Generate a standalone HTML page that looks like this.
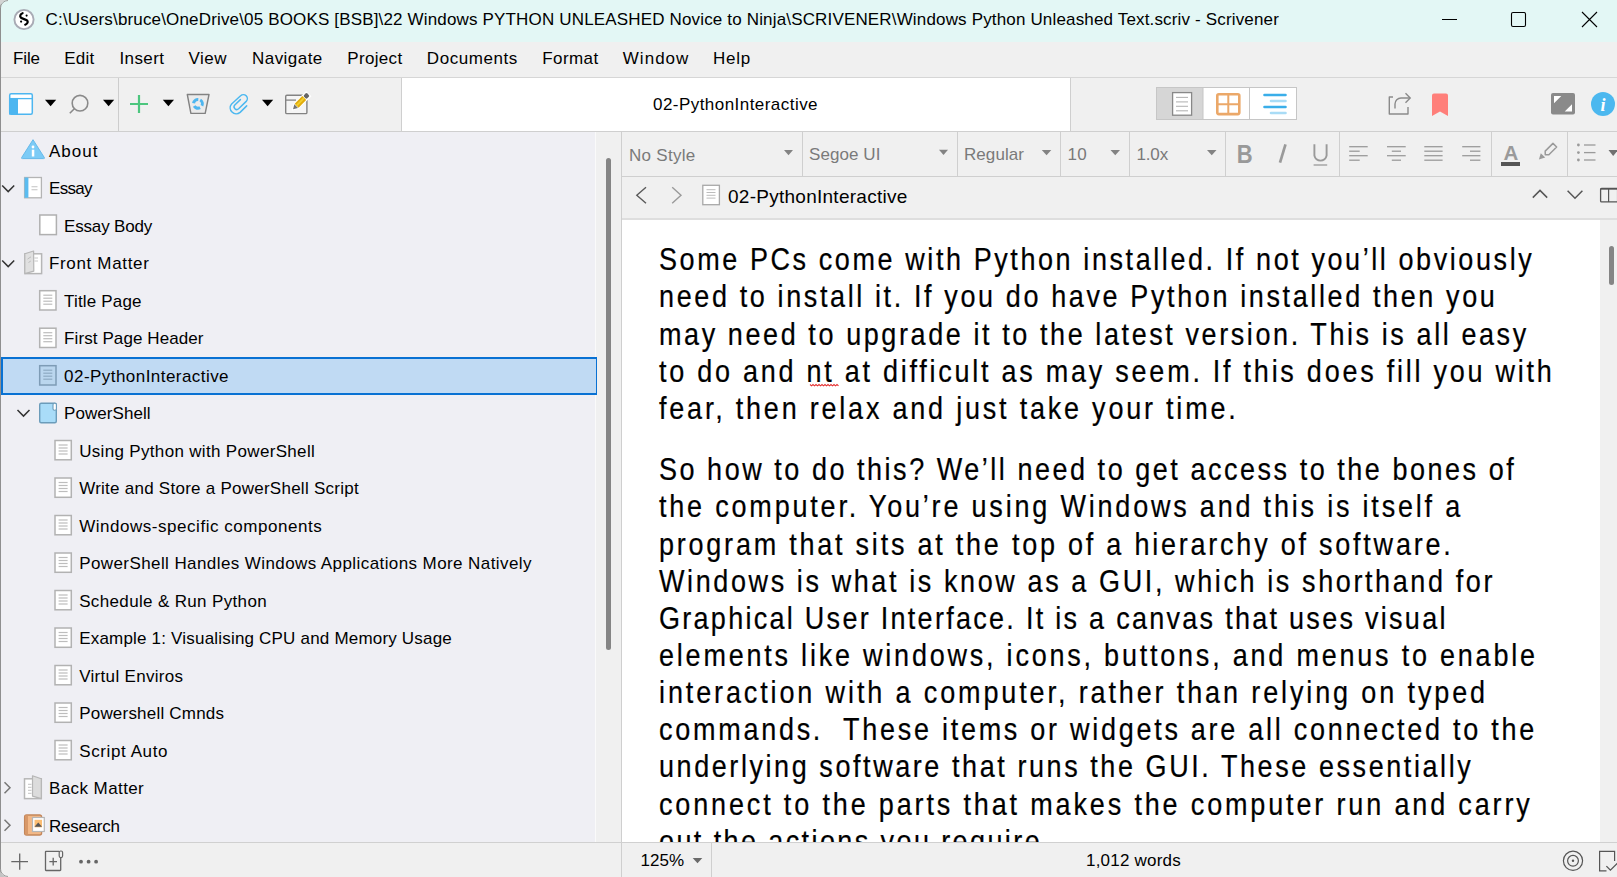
<!DOCTYPE html>
<html><head><meta charset="utf-8"><style>
html,body{margin:0;padding:0;}
body{width:1617px;height:877px;overflow:hidden;position:relative;background:#f0f0f0;font-family:"Liberation Sans", sans-serif;}
.r{position:absolute;}
.t{position:absolute;white-space:pre;font-family:"Liberation Sans", sans-serif;}
svg{position:absolute;overflow:visible;}
#ed{position:absolute;left:622px;top:220px;width:978px;height:622px;overflow:hidden;}
</style></head><body>
<div class="r" style="left:0;top:0;width:1617px;height:42px;background:#e3f7f5"></div>
<div class="r" style="left:0;top:42px;width:1617px;height:90px;background:#f0f0f0"></div>
<div class="r" style="left:0;top:77px;width:1617px;height:1px;background:#d6d6d6"></div>
<div class="r" style="left:0;top:131px;width:1617px;height:1px;background:#cfcfcf"></div>
<div class="r" style="left:401px;top:78px;width:1px;height:53px;background:#cfcfcf"></div>
<div class="r" style="left:402px;top:78px;width:668px;height:53px;background:#fff"></div>
<div class="r" style="left:1070px;top:78px;width:1px;height:53px;background:#cfcfcf"></div>
<div class="r" style="left:118px;top:78px;width:1px;height:53px;background:#cdcdcd"></div>
<div class="r" style="left:0;top:132px;width:595px;height:710px;background:#efeff4"></div>
<div class="r" style="left:595px;top:132px;width:1px;height:710px;background:#fafafa"></div>
<div class="r" style="left:596px;top:132px;width:25px;height:710px;background:#f0f0f0"></div>
<div class="r" style="left:606px;top:158px;width:5px;height:492px;background:#858585;border-radius:3px"></div>
<div class="r" style="left:621px;top:132px;width:1px;height:710px;background:#cfcfcf"></div>
<div class="r" style="left:1px;top:357px;width:593px;height:34px;background:#c0daf3;border:2px solid #0871d3;border-right:1px solid #0871d3"></div>
<div class="r" style="left:622px;top:132px;width:995px;height:86px;background:#f0f0f0"></div>
<div class="r" style="left:622px;top:176px;width:995px;height:1px;background:#cfcfcf"></div>
<div class="r" style="left:622px;top:218px;width:995px;height:2px;background:#dedede"></div>
<div class="r" style="left:802px;top:132px;width:1px;height:44px;background:#cfcfcf"></div>
<div class="r" style="left:957px;top:132px;width:1px;height:44px;background:#cfcfcf"></div>
<div class="r" style="left:1060px;top:132px;width:1px;height:44px;background:#cfcfcf"></div>
<div class="r" style="left:1129px;top:132px;width:1px;height:44px;background:#cfcfcf"></div>
<div class="r" style="left:1225px;top:132px;width:1px;height:44px;background:#cfcfcf"></div>
<div class="r" style="left:1339px;top:132px;width:1px;height:44px;background:#cfcfcf"></div>
<div class="r" style="left:1491px;top:132px;width:1px;height:44px;background:#cfcfcf"></div>
<div class="r" style="left:1567px;top:132px;width:1px;height:44px;background:#cfcfcf"></div>
<div class="r" style="left:622px;top:220px;width:978px;height:622px;background:#fff"></div>
<div class="r" style="left:1600px;top:220px;width:17px;height:622px;background:#f0f0f0"></div>
<div class="r" style="left:1609px;top:246px;width:5px;height:39px;background:#858585;border-radius:3px"></div>
<div class="r" style="left:0;top:842px;width:1617px;height:35px;background:#f0f0f0"></div>
<div class="r" style="left:0;top:842px;width:1617px;height:1px;background:#d0d0d0"></div>
<div class="r" style="left:621px;top:843px;width:1px;height:34px;background:#cfcfcf"></div>
<div class="r" style="left:711px;top:843px;width:1px;height:34px;background:#cfcfcf"></div>
<div class="r" style="left:0;top:0;width:1px;height:877px;background:#8f8f8f"></div>
<div class="t" style="left:45.6px;top:11.21px;font-size:17px;line-height:17px;color:#000;letter-spacing:0.161px;word-spacing:0.000px;">C:\Users\bruce\OneDrive\05 BOOKS [BSB]\22 Windows PYTHON UNLEASHED Novice to Ninja\SCRIVENER\Windows Python Unleashed Text.scriv - Scrivener</div>
<div class="t" style="left:13.0px;top:50.41px;font-size:17px;line-height:17px;color:#000;letter-spacing:-0.127px;word-spacing:0.000px;">File</div>
<div class="t" style="left:64.3px;top:50.41px;font-size:17px;line-height:17px;color:#000;letter-spacing:0.226px;word-spacing:0.000px;">Edit</div>
<div class="t" style="left:119.5px;top:50.41px;font-size:17px;line-height:17px;color:#000;letter-spacing:0.395px;word-spacing:0.000px;">Insert</div>
<div class="t" style="left:188.4px;top:50.41px;font-size:17px;line-height:17px;color:#000;letter-spacing:0.513px;word-spacing:0.000px;">View</div>
<div class="t" style="left:252.0px;top:50.41px;font-size:17px;line-height:17px;color:#000;letter-spacing:0.461px;word-spacing:0.000px;">Navigate</div>
<div class="t" style="left:347.3px;top:50.41px;font-size:17px;line-height:17px;color:#000;letter-spacing:0.325px;word-spacing:0.000px;">Project</div>
<div class="t" style="left:426.8px;top:50.41px;font-size:17px;line-height:17px;color:#000;letter-spacing:0.568px;word-spacing:0.000px;">Documents</div>
<div class="t" style="left:542.2px;top:50.41px;font-size:17px;line-height:17px;color:#000;letter-spacing:0.443px;word-spacing:0.000px;">Format</div>
<div class="t" style="left:622.8px;top:50.41px;font-size:17px;line-height:17px;color:#000;letter-spacing:1.022px;word-spacing:0.000px;">Window</div>
<div class="t" style="left:713.0px;top:50.41px;font-size:17px;line-height:17px;color:#000;letter-spacing:0.708px;word-spacing:0.000px;">Help</div>
<div class="t" style="left:653.0px;top:96.21px;font-size:17px;line-height:17px;color:#000;letter-spacing:0.454px;word-spacing:0.000px;">02-PythonInteractive</div>
<div class="t" style="left:629.0px;top:147.11px;font-size:17px;line-height:17px;color:#7a7a7a;letter-spacing:0.281px;word-spacing:0.000px;">No Style</div>
<div class="t" style="left:809.0px;top:145.61px;font-size:17px;line-height:17px;color:#7a7a7a;letter-spacing:0.076px;word-spacing:0.000px;">Segoe UI</div>
<div class="t" style="left:964.0px;top:145.61px;font-size:17px;line-height:17px;color:#7a7a7a;letter-spacing:0.065px;word-spacing:0.000px;">Regular</div>
<div class="t" style="left:1067.5px;top:145.61px;font-size:17px;line-height:17px;color:#7a7a7a;letter-spacing:0.289px;word-spacing:0.000px;">10</div>
<div class="t" style="left:1136.5px;top:145.61px;font-size:17px;line-height:17px;color:#7a7a7a;letter-spacing:-0.160px;word-spacing:0.000px;">1.0x</div>
<div class="t" style="left:728.0px;top:187.12px;font-size:19px;line-height:19px;color:#000;letter-spacing:0.262px;word-spacing:0.000px;">02-PythonInteractive</div>
<div class="t" style="left:640.5px;top:852.41px;font-size:17px;line-height:17px;color:#000;letter-spacing:0.004px;word-spacing:0.000px;">125%</div>
<div class="t" style="left:1086.0px;top:852.41px;font-size:17px;line-height:17px;color:#000;letter-spacing:0.216px;word-spacing:0.000px;">1,012 words</div>
<div class="t" style="left:49.0px;top:142.81px;font-size:17px;line-height:17px;color:#000;letter-spacing:0.993px;word-spacing:0.000px;">About</div>
<div class="t" style="left:49.0px;top:180.31px;font-size:17px;line-height:17px;color:#000;letter-spacing:-0.679px;word-spacing:0.000px;">Essay</div>
<div class="t" style="left:64.1px;top:217.81px;font-size:17px;line-height:17px;color:#000;letter-spacing:-0.187px;word-spacing:0.000px;">Essay Body</div>
<div class="t" style="left:49.0px;top:255.31px;font-size:17px;line-height:17px;color:#000;letter-spacing:0.659px;word-spacing:0.000px;">Front Matter</div>
<div class="t" style="left:64.1px;top:292.81px;font-size:17px;line-height:17px;color:#000;letter-spacing:0.168px;word-spacing:0.000px;">Title Page</div>
<div class="t" style="left:64.1px;top:330.31px;font-size:17px;line-height:17px;color:#000;letter-spacing:0.091px;word-spacing:0.000px;">First Page Header</div>
<div class="t" style="left:64.1px;top:367.81px;font-size:17px;line-height:17px;color:#000;letter-spacing:0.449px;word-spacing:0.000px;">02-PythonInteractive</div>
<div class="t" style="left:64.1px;top:405.31px;font-size:17px;line-height:17px;color:#000;letter-spacing:0.050px;word-spacing:0.000px;">PowerShell</div>
<div class="t" style="left:79.2px;top:442.81px;font-size:17px;line-height:17px;color:#000;letter-spacing:0.326px;word-spacing:0.000px;">Using Python with PowerShell</div>
<div class="t" style="left:79.2px;top:480.31px;font-size:17px;line-height:17px;color:#000;letter-spacing:0.252px;word-spacing:0.000px;">Write and Store a PowerShell Script</div>
<div class="t" style="left:79.2px;top:517.81px;font-size:17px;line-height:17px;color:#000;letter-spacing:0.531px;word-spacing:0.000px;">Windows-specific components</div>
<div class="t" style="left:79.2px;top:555.31px;font-size:17px;line-height:17px;color:#000;letter-spacing:0.412px;word-spacing:0.000px;">PowerShell Handles Windows Applications More Natively</div>
<div class="t" style="left:79.2px;top:592.81px;font-size:17px;line-height:17px;color:#000;letter-spacing:0.347px;word-spacing:0.000px;">Schedule &amp; Run Python</div>
<div class="t" style="left:79.2px;top:630.31px;font-size:17px;line-height:17px;color:#000;letter-spacing:0.195px;word-spacing:0.000px;">Example 1: Visualising CPU and Memory Usage</div>
<div class="t" style="left:79.2px;top:667.81px;font-size:17px;line-height:17px;color:#000;letter-spacing:0.311px;word-spacing:0.000px;">Virtul Enviros</div>
<div class="t" style="left:79.2px;top:705.31px;font-size:17px;line-height:17px;color:#000;letter-spacing:0.204px;word-spacing:0.000px;">Powershell Cmnds</div>
<div class="t" style="left:79.2px;top:742.81px;font-size:17px;line-height:17px;color:#000;letter-spacing:0.607px;word-spacing:0.000px;">Script Auto</div>
<div class="t" style="left:49.0px;top:780.31px;font-size:17px;line-height:17px;color:#000;letter-spacing:0.409px;word-spacing:0.000px;">Back Matter</div>
<div class="t" style="left:49.0px;top:817.81px;font-size:17px;line-height:17px;color:#000;letter-spacing:-0.258px;word-spacing:0.000px;">Research</div>
<div id="ed">
<div class="t" style="left:37.0px;top:28.34px;font-size:27px;line-height:27px;color:#000;letter-spacing:2.583px;word-spacing:0.000px;-webkit-text-stroke:0.2px #000;transform:scaleY(1.1852);transform-origin:0 22.86px;">Some PCs come with Python installed. If not you’ll obviously</div>
<div class="t" style="left:37.0px;top:65.44px;font-size:27px;line-height:27px;color:#000;letter-spacing:2.616px;word-spacing:0.000px;-webkit-text-stroke:0.2px #000;transform:scaleY(1.1852);transform-origin:0 22.86px;">need to install it. If you do have Python installed then you</div>
<div class="t" style="left:37.0px;top:102.54px;font-size:27px;line-height:27px;color:#000;letter-spacing:2.587px;word-spacing:0.000px;-webkit-text-stroke:0.2px #000;transform:scaleY(1.1852);transform-origin:0 22.86px;">may need to upgrade it to the latest version. This is all easy</div>
<div class="t" style="left:37.0px;top:139.64px;font-size:27px;line-height:27px;color:#000;letter-spacing:2.747px;word-spacing:0.000px;-webkit-text-stroke:0.2px #000;transform:scaleY(1.1852);transform-origin:0 22.86px;">to do and nt at difficult as may seem. If this does fill you with</div>
<div class="t" style="left:37.0px;top:176.74px;font-size:27px;line-height:27px;color:#000;letter-spacing:2.787px;word-spacing:0.000px;-webkit-text-stroke:0.2px #000;transform:scaleY(1.1852);transform-origin:0 22.86px;">fear, then relax and just take your time.</div>
<div class="t" style="left:37.0px;top:238.34px;font-size:27px;line-height:27px;color:#000;letter-spacing:2.530px;word-spacing:0.000px;-webkit-text-stroke:0.2px #000;transform:scaleY(1.1852);transform-origin:0 22.86px;">So how to do this? We’ll need to get access to the bones of</div>
<div class="t" style="left:37.0px;top:275.47px;font-size:27px;line-height:27px;color:#000;letter-spacing:2.803px;word-spacing:0.000px;-webkit-text-stroke:0.2px #000;transform:scaleY(1.1852);transform-origin:0 22.86px;">the computer. You’re using Windows and this is itself a</div>
<div class="t" style="left:37.0px;top:312.60px;font-size:27px;line-height:27px;color:#000;letter-spacing:2.771px;word-spacing:0.000px;-webkit-text-stroke:0.2px #000;transform:scaleY(1.1852);transform-origin:0 22.86px;">program that sits at the top of a hierarchy of software.</div>
<div class="t" style="left:37.0px;top:349.73px;font-size:27px;line-height:27px;color:#000;letter-spacing:2.602px;word-spacing:0.000px;-webkit-text-stroke:0.2px #000;transform:scaleY(1.1852);transform-origin:0 22.86px;">Windows is what is know as a GUI, which is shorthand for</div>
<div class="t" style="left:37.0px;top:386.86px;font-size:27px;line-height:27px;color:#000;letter-spacing:2.279px;word-spacing:0.000px;-webkit-text-stroke:0.2px #000;transform:scaleY(1.1852);transform-origin:0 22.86px;">Graphical User Interface. It is a canvas that uses visual</div>
<div class="t" style="left:37.0px;top:423.99px;font-size:27px;line-height:27px;color:#000;letter-spacing:2.782px;word-spacing:0.000px;-webkit-text-stroke:0.2px #000;transform:scaleY(1.1852);transform-origin:0 22.86px;">elements like windows, icons, buttons, and menus to enable</div>
<div class="t" style="left:37.0px;top:461.12px;font-size:27px;line-height:27px;color:#000;letter-spacing:2.879px;word-spacing:0.000px;-webkit-text-stroke:0.2px #000;transform:scaleY(1.1852);transform-origin:0 22.86px;">interaction with a computer, rather than relying on typed</div>
<div class="t" style="left:37.0px;top:498.25px;font-size:27px;line-height:27px;color:#000;letter-spacing:2.726px;word-spacing:0.000px;-webkit-text-stroke:0.2px #000;transform:scaleY(1.1852);transform-origin:0 22.86px;">commands.  These items or widgets are all connected to the</div>
<div class="t" style="left:37.0px;top:535.38px;font-size:27px;line-height:27px;color:#000;letter-spacing:2.570px;word-spacing:0.000px;-webkit-text-stroke:0.2px #000;transform:scaleY(1.1852);transform-origin:0 22.86px;">underlying software that runs the GUI. These essentially</div>
<div class="t" style="left:37.0px;top:572.51px;font-size:27px;line-height:27px;color:#000;letter-spacing:2.849px;word-spacing:0.000px;-webkit-text-stroke:0.2px #000;transform:scaleY(1.1852);transform-origin:0 22.86px;">connect to the parts that makes the computer run and carry</div>
<div class="t" style="left:37.0px;top:609.64px;font-size:27px;line-height:27px;color:#000;letter-spacing:2.403px;word-spacing:0.000px;-webkit-text-stroke:0.2px #000;transform:scaleY(1.1852);transform-origin:0 22.86px;">out the actions you require.</div>
</div>
<svg width="1617" height="877" style="left:0;top:0" viewBox="0 0 1617 877"><circle cx="24" cy="19.5" r="9.6" fill="#fff" stroke="#a9abb5" stroke-width="1.9"/>
<path d="M22.6 13.2 C20.4 13.9 19.5 16.2 20.9 17.6 C22.3 19 26.2 19.3 27.4 20.8 C28.4 22.2 27 24 25.2 24.7" fill="none" stroke="#000" stroke-width="2.2" stroke-linecap="round"/>
<circle cx="26.6" cy="15.6" r="1.05" fill="#000"/><circle cx="21.1" cy="21.6" r="1.1" fill="#000"/>
<line x1="1442" y1="19.5" x2="1457" y2="19.5" stroke="#000" stroke-width="1"/>
<rect x="1511.5" y="12.5" width="14" height="14" rx="1.5" fill="none" stroke="#000" stroke-width="1.1"/>
<path d="M1582 12 L1597 27 M1597 12 L1582 27" stroke="#000" stroke-width="1.1"/>
<rect x="9.7" y="93.7" width="22.6" height="20.6" rx="1.5" fill="#fff" stroke="#4db6f0" stroke-width="1.5"/>
<rect x="9" y="98" width="9" height="16.5" fill="#4db6f0"/>
<line x1="9" y1="98.6" x2="33" y2="98.6" stroke="#4db6f0" stroke-width="1.3"/>
<path d="M45 99.8 L56.2 99.8 L50.6 106.2 Z" fill="#000"/>
<path d="M103 99.8 L114.2 99.8 L108.6 106.2 Z" fill="#000"/>
<path d="M162.8 99.8 L174.0 99.8 L168.4 106.2 Z" fill="#000"/>
<path d="M262 99.8 L273.2 99.8 L267.6 106.2 Z" fill="#000"/>
<circle cx="80" cy="103.2" r="7.8" fill="none" stroke="#8a8a8a" stroke-width="1.6"/>
<line x1="69.8" y1="113.3" x2="74.8" y2="108.3" stroke="#8a8a8a" stroke-width="1.6"/>
<path d="M139 95 V113 M130 104 H148" stroke="#4cc67e" stroke-width="2.2"/>
<path d="M187.3 94.5 L209 94.5 L205.2 113.4 L190.9 113.4 Z" fill="#ebebeb" stroke="#828282" stroke-width="1.4" stroke-linejoin="round"/>
<circle cx="198" cy="103.8" r="4.4" fill="none" stroke="#4db6f0" stroke-width="3" stroke-dasharray="6.5 2.7" transform="rotate(-60 198 103.8)"/>
<path d="M240.4 99.6 L234.8 105 A2.69 2.69 0 0 0 238.6 108.8 L246.2 101.4 A3.96 3.96 0 0 0 240.6 95.8 L231.6 104 A6 6 0 0 0 240.1 112.4 L246.7 105.9" fill="none" stroke="#4cb8f0" stroke-width="1.5" stroke-linecap="round" stroke-linejoin="round"/>
<rect x="285.7" y="95.2" width="21.2" height="18.4" rx="1.2" fill="#f5f5f5" stroke="#838383" stroke-width="1.4"/>
<line x1="285.7" y1="100.1" x2="296" y2="100.1" stroke="#838383" stroke-width="1.3"/>
<g transform="translate(292.8,109.5) rotate(-45)"><path d="M0 0 L5 -2.9 H21.8 V2.9 H5 Z" fill="#fff" stroke="#fff" stroke-width="1.6"/><path d="M0.3 0 L4.8 -2.6 V2.6 Z" fill="#737373"/><rect x="5.4" y="-2.75" width="10.8" height="5.5" fill="#e2ac0c"/><rect x="5.4" y="-1" width="10.8" height="1.8" fill="#f2cf2e"/><rect x="17" y="-2.3" width="4.6" height="4.6" rx="1.3" fill="#666"/></g>
<rect x="1156.5" y="87.5" width="140" height="32" fill="#fff" stroke="#c6c6c6" stroke-width="1"/>
<rect x="1157" y="88" width="46" height="31" fill="#d6d6d6"/>
<line x1="1203" y1="88" x2="1203" y2="119" stroke="#c6c6c6"/>
<line x1="1249.5" y1="88" x2="1249.5" y2="119" stroke="#c6c6c6"/>
<rect x="1172.6" y="92.6" width="19" height="22.6" fill="#fff" stroke="#888" stroke-width="1.3"/>
<line x1="1176" y1="97.4" x2="1188" y2="97.4" stroke="#b5b5b5" stroke-width="1.1"/>
<line x1="1176" y1="101.9" x2="1188" y2="101.9" stroke="#b5b5b5" stroke-width="1.1"/>
<line x1="1176" y1="106.3" x2="1188" y2="106.3" stroke="#b5b5b5" stroke-width="1.1"/>
<line x1="1176" y1="110.8" x2="1188" y2="110.8" stroke="#b5b5b5" stroke-width="1.1"/>
<rect x="1217.3" y="94.3" width="22" height="19.8" rx="1.5" fill="#fff" stroke="#eba869" stroke-width="2.6"/>
<path d="M1228.3 94.5 V114 M1217.5 104.2 H1239" stroke="#eba869" stroke-width="2"/>
<path d="M1264.5 95 H1285.5 M1264.5 107 H1285.5" stroke="#3aaee9" stroke-width="2.6" stroke-linecap="round"/>
<path d="M1271 101 H1285.5 M1271 113 H1285.5" stroke="#a9dcf6" stroke-width="2.6" stroke-linecap="round"/>
<path d="M1393 97 H1389.3 V114 H1408 V107" fill="none" stroke="#8a8a8a" stroke-width="1.4" stroke-linejoin="round"/>
<path d="M1395 108.5 V104 A6 6 0 0 1 1401 98 H1410" fill="none" stroke="#8a8a8a" stroke-width="1.4"/>
<path d="M1405.5 93.3 L1410.2 98 L1405.5 102.7" fill="none" stroke="#8a8a8a" stroke-width="1.4"/>
<path d="M1432 95.5 Q1432 93.5 1434 93.5 H1446 Q1448 93.5 1448 95.5 V116 L1440 111.5 L1432 116 Z" fill="#ff7f7a"/>
<rect x="1551" y="93" width="24" height="21.5" rx="2" fill="#8a8a8a"/>
<path d="M1554 96 H1561.3 L1554 103.3 Z M1572 104.2 V111.5 H1564.7 Z" fill="#fff"/>
<circle cx="1603" cy="104" r="12" fill="#4cb8ef"/>
<text x="1603" y="110.5" text-anchor="middle" font-family="Liberation Serif" font-style="italic" font-weight="bold" font-size="18" fill="#fff">i</text>
<path d="M33 139.70000000000002 L44.3 157.5 Q45 158.60000000000002 43.5 158.60000000000002 H22.5 Q21 158.60000000000002 21.7 157.5 Z" fill="#7ccbf6" stroke="#66b9ea" stroke-width="1" stroke-linejoin="round"/>
<circle cx="33" cy="147.0" r="1.4" fill="#fff"/><rect x="31.8" y="149.70000000000002" width="2.5" height="6.8" fill="#fff"/>
<polyline points="2.2,185.5 8.2,191.60000000000002 14.2,185.5" fill="none" stroke="#333" stroke-width="1.5"/>
<rect x="24.6" y="177.5" width="16.8" height="20.3" fill="#fff" stroke="#b4b4b4" stroke-width="1.3"/>
<rect x="24.6" y="177.5" width="3.8" height="20.3" fill="#5bbcf0"/>
<path d="M31.5 186.8 H37.5 M31.5 189.8 H37.5" stroke="#c2c2c2" stroke-width="1.1"/>
<rect x="39.8" y="215.0" width="16.6" height="19.6" fill="#fff" stroke="#b0b0b0" stroke-width="1.5"/>
<polyline points="2.2,260.5 8.2,266.6 14.2,260.5" fill="none" stroke="#333" stroke-width="1.5"/>
<rect x="25" y="253.8" width="16.6" height="19.8" fill="#fff" stroke="#b6b6b6" stroke-width="1.5"/>
<path d="M24.8 253.8 L33.6 251.0 L33.8 271.2 L24.8 273.6 Z" fill="#e0e0e0" stroke="#b6b6b6" stroke-width="1.2" stroke-linejoin="round"/>
<path d="M27.5 259.1 L31 256.8 M28.5 262.5 L30.8 261.0" stroke="#bdbdbd" stroke-width="1"/>
<path d="M34.3 258.0 H38 M34.3 261.0 H38" stroke="#c8c8c8" stroke-width="1"/>
<rect x="39.7" y="290.7" width="16.3" height="19.3" fill="#fff" stroke="#b2b2b2" stroke-width="1.5"/>
<line x1="43.3" y1="295.2" x2="52.3" y2="295.2" stroke="#bdbdbd" stroke-width="1.2"/>
<line x1="43.3" y1="298.2" x2="52.3" y2="298.2" stroke="#bdbdbd" stroke-width="1.2"/>
<line x1="43.3" y1="301.2" x2="52.3" y2="301.2" stroke="#bdbdbd" stroke-width="1.2"/>
<line x1="43.3" y1="304.2" x2="52.3" y2="304.2" stroke="#bdbdbd" stroke-width="1.2"/>
<rect x="39.7" y="328.2" width="16.3" height="19.3" fill="#fff" stroke="#b2b2b2" stroke-width="1.5"/>
<line x1="43.3" y1="332.7" x2="52.3" y2="332.7" stroke="#bdbdbd" stroke-width="1.2"/>
<line x1="43.3" y1="335.7" x2="52.3" y2="335.7" stroke="#bdbdbd" stroke-width="1.2"/>
<line x1="43.3" y1="338.7" x2="52.3" y2="338.7" stroke="#bdbdbd" stroke-width="1.2"/>
<line x1="43.3" y1="341.7" x2="52.3" y2="341.7" stroke="#bdbdbd" stroke-width="1.2"/>
<rect x="39.7" y="365.7" width="16.3" height="19.3" fill="#bad6ee" stroke="#7e9cb6" stroke-width="1.5"/>
<line x1="43.3" y1="370.2" x2="52.3" y2="370.2" stroke="#8eaac2" stroke-width="1.2"/>
<line x1="43.3" y1="373.2" x2="52.3" y2="373.2" stroke="#8eaac2" stroke-width="1.2"/>
<line x1="43.3" y1="376.2" x2="52.3" y2="376.2" stroke="#8eaac2" stroke-width="1.2"/>
<line x1="43.3" y1="379.2" x2="52.3" y2="379.2" stroke="#8eaac2" stroke-width="1.2"/>
<polyline points="17.5,410.0 23.5,416.1 29.5,410.0" fill="none" stroke="#333" stroke-width="1.5"/>
<rect x="39.7" y="403.2" width="16.6" height="19.6" rx="1.5" fill="#a9dcf8" stroke="#6b9cba" stroke-width="1.4"/>
<rect x="53" y="403.2" width="3.4" height="7" rx="1.5" fill="#fff" stroke="#6b9cba" stroke-width="1.1"/>
<rect x="55.0" y="440.5" width="16.3" height="19.3" fill="#fff" stroke="#b2b2b2" stroke-width="1.5"/>
<line x1="58.599999999999994" y1="445.0" x2="67.6" y2="445.0" stroke="#bdbdbd" stroke-width="1.2"/>
<line x1="58.599999999999994" y1="448.0" x2="67.6" y2="448.0" stroke="#bdbdbd" stroke-width="1.2"/>
<line x1="58.599999999999994" y1="451.0" x2="67.6" y2="451.0" stroke="#bdbdbd" stroke-width="1.2"/>
<line x1="58.599999999999994" y1="454.0" x2="67.6" y2="454.0" stroke="#bdbdbd" stroke-width="1.2"/>
<rect x="55.0" y="478.0" width="16.3" height="19.3" fill="#fff" stroke="#b2b2b2" stroke-width="1.5"/>
<line x1="58.599999999999994" y1="482.5" x2="67.6" y2="482.5" stroke="#bdbdbd" stroke-width="1.2"/>
<line x1="58.599999999999994" y1="485.5" x2="67.6" y2="485.5" stroke="#bdbdbd" stroke-width="1.2"/>
<line x1="58.599999999999994" y1="488.5" x2="67.6" y2="488.5" stroke="#bdbdbd" stroke-width="1.2"/>
<line x1="58.599999999999994" y1="491.5" x2="67.6" y2="491.5" stroke="#bdbdbd" stroke-width="1.2"/>
<rect x="55.0" y="515.5" width="16.3" height="19.3" fill="#fff" stroke="#b2b2b2" stroke-width="1.5"/>
<line x1="58.599999999999994" y1="520.0" x2="67.6" y2="520.0" stroke="#bdbdbd" stroke-width="1.2"/>
<line x1="58.599999999999994" y1="523.0" x2="67.6" y2="523.0" stroke="#bdbdbd" stroke-width="1.2"/>
<line x1="58.599999999999994" y1="526.0" x2="67.6" y2="526.0" stroke="#bdbdbd" stroke-width="1.2"/>
<line x1="58.599999999999994" y1="529.0" x2="67.6" y2="529.0" stroke="#bdbdbd" stroke-width="1.2"/>
<rect x="55.0" y="553.0" width="16.3" height="19.3" fill="#fff" stroke="#b2b2b2" stroke-width="1.5"/>
<line x1="58.599999999999994" y1="557.5" x2="67.6" y2="557.5" stroke="#bdbdbd" stroke-width="1.2"/>
<line x1="58.599999999999994" y1="560.5" x2="67.6" y2="560.5" stroke="#bdbdbd" stroke-width="1.2"/>
<line x1="58.599999999999994" y1="563.5" x2="67.6" y2="563.5" stroke="#bdbdbd" stroke-width="1.2"/>
<line x1="58.599999999999994" y1="566.5" x2="67.6" y2="566.5" stroke="#bdbdbd" stroke-width="1.2"/>
<rect x="55.0" y="590.5" width="16.3" height="19.3" fill="#fff" stroke="#b2b2b2" stroke-width="1.5"/>
<line x1="58.599999999999994" y1="595.0" x2="67.6" y2="595.0" stroke="#bdbdbd" stroke-width="1.2"/>
<line x1="58.599999999999994" y1="598.0" x2="67.6" y2="598.0" stroke="#bdbdbd" stroke-width="1.2"/>
<line x1="58.599999999999994" y1="601.0" x2="67.6" y2="601.0" stroke="#bdbdbd" stroke-width="1.2"/>
<line x1="58.599999999999994" y1="604.0" x2="67.6" y2="604.0" stroke="#bdbdbd" stroke-width="1.2"/>
<rect x="55.0" y="628.0" width="16.3" height="19.3" fill="#fff" stroke="#b2b2b2" stroke-width="1.5"/>
<line x1="58.599999999999994" y1="632.5" x2="67.6" y2="632.5" stroke="#bdbdbd" stroke-width="1.2"/>
<line x1="58.599999999999994" y1="635.5" x2="67.6" y2="635.5" stroke="#bdbdbd" stroke-width="1.2"/>
<line x1="58.599999999999994" y1="638.5" x2="67.6" y2="638.5" stroke="#bdbdbd" stroke-width="1.2"/>
<line x1="58.599999999999994" y1="641.5" x2="67.6" y2="641.5" stroke="#bdbdbd" stroke-width="1.2"/>
<rect x="55.0" y="665.5" width="16.3" height="19.3" fill="#fff" stroke="#b2b2b2" stroke-width="1.5"/>
<line x1="58.599999999999994" y1="670.0" x2="67.6" y2="670.0" stroke="#bdbdbd" stroke-width="1.2"/>
<line x1="58.599999999999994" y1="673.0" x2="67.6" y2="673.0" stroke="#bdbdbd" stroke-width="1.2"/>
<line x1="58.599999999999994" y1="676.0" x2="67.6" y2="676.0" stroke="#bdbdbd" stroke-width="1.2"/>
<line x1="58.599999999999994" y1="679.0" x2="67.6" y2="679.0" stroke="#bdbdbd" stroke-width="1.2"/>
<rect x="55.0" y="703.0" width="16.3" height="19.3" fill="#fff" stroke="#b2b2b2" stroke-width="1.5"/>
<line x1="58.599999999999994" y1="707.5" x2="67.6" y2="707.5" stroke="#bdbdbd" stroke-width="1.2"/>
<line x1="58.599999999999994" y1="710.5" x2="67.6" y2="710.5" stroke="#bdbdbd" stroke-width="1.2"/>
<line x1="58.599999999999994" y1="713.5" x2="67.6" y2="713.5" stroke="#bdbdbd" stroke-width="1.2"/>
<line x1="58.599999999999994" y1="716.5" x2="67.6" y2="716.5" stroke="#bdbdbd" stroke-width="1.2"/>
<rect x="55.0" y="740.5" width="16.3" height="19.3" fill="#fff" stroke="#b2b2b2" stroke-width="1.5"/>
<line x1="58.599999999999994" y1="745.0" x2="67.6" y2="745.0" stroke="#bdbdbd" stroke-width="1.2"/>
<line x1="58.599999999999994" y1="748.0" x2="67.6" y2="748.0" stroke="#bdbdbd" stroke-width="1.2"/>
<line x1="58.599999999999994" y1="751.0" x2="67.6" y2="751.0" stroke="#bdbdbd" stroke-width="1.2"/>
<line x1="58.599999999999994" y1="754.0" x2="67.6" y2="754.0" stroke="#bdbdbd" stroke-width="1.2"/>
<polyline points="4.5,782.3 10.0,787.8 4.5,793.3" fill="none" stroke="#777" stroke-width="1.5"/>
<rect x="24.5" y="778.8" width="16.8" height="19.8" fill="#fff" stroke="#b6b6b6" stroke-width="1.5"/>
<path d="M32.5 775.8 L41.3 778.8 L41.3 798.5999999999999 L32.5 796.1999999999999 Z" fill="#dcdcdc" stroke="#b6b6b6" stroke-width="1.2" stroke-linejoin="round"/>
<path d="M28 784.3 H31.5 M28 787.3 H31.5 M28 790.3 H31.5 M28 793.3 H31.5" stroke="#c3c3c3" stroke-width="1"/>
<polyline points="4.5,819.8 10.0,825.3 4.5,830.8" fill="none" stroke="#777" stroke-width="1.5"/>
<rect x="24.6" y="815.0" width="17" height="20" rx="2" fill="#f2b887" stroke="#c4865a" stroke-width="1.3"/>
<rect x="25" y="815.5" width="3" height="19" fill="#d89868"/>
<rect x="32.5" y="817.5" width="11.8" height="14" fill="#fff" stroke="#b6b6b6" stroke-width="1.2"/>
<rect x="34.5" y="819.8" width="7.5" height="7.5" fill="#fbbd73"/>
<path d="M34.5 826.8 L38.25 822.5 L42 826.8 Z" fill="#555"/>
<path d="M784 150 H793 L788.5 155.3 Z" fill="#838383"/>
<path d="M939 149.8 H948 L943.5 155.10000000000002 Z" fill="#838383"/>
<path d="M1041.8 150 H1051.3 L1046.55 155.3 Z" fill="#838383"/>
<path d="M1110.5 150 H1120 L1115.25 155.3 Z" fill="#838383"/>
<path d="M1207 150 H1216.5 L1211.75 155.3 Z" fill="#838383"/>
<text x="1236.8" y="162.7" font-family="Liberation Sans" font-weight="bold" font-size="25" fill="#999" transform="translate(1236.8 0) scale(0.88 1) translate(-1236.8 0)">B</text>
<line x1="1285.5" y1="144.3" x2="1280" y2="162.7" stroke="#9a9a9a" stroke-width="2.7"/>
<path d="M1314.4 144.3 V155.5 A6.2 6.2 0 0 0 1326.6 155.5 V144.3" fill="none" stroke="#9a9a9a" stroke-width="1.9"/>
<line x1="1313.6" y1="165" x2="1327.2" y2="165" stroke="#9a9a9a" stroke-width="1.3"/>
<line x1="1349.2" y1="146.7" x2="1367.7" y2="146.7" stroke="#9a9a9a" stroke-width="1.3"/>
<line x1="1349.2" y1="151.2" x2="1359.7" y2="151.2" stroke="#9a9a9a" stroke-width="1.3"/>
<line x1="1349.2" y1="155.7" x2="1367.7" y2="155.7" stroke="#9a9a9a" stroke-width="1.3"/>
<line x1="1349.2" y1="160.2" x2="1359.7" y2="160.2" stroke="#9a9a9a" stroke-width="1.3"/>
<line x1="1387" y1="146.7" x2="1405.7" y2="146.7" stroke="#9a9a9a" stroke-width="1.3"/>
<line x1="1391.8" y1="151.2" x2="1401" y2="151.2" stroke="#9a9a9a" stroke-width="1.3"/>
<line x1="1387" y1="155.7" x2="1405.7" y2="155.7" stroke="#9a9a9a" stroke-width="1.3"/>
<line x1="1391.8" y1="160.2" x2="1401" y2="160.2" stroke="#9a9a9a" stroke-width="1.3"/>
<line x1="1424.3" y1="146.7" x2="1442.6" y2="146.7" stroke="#9a9a9a" stroke-width="1.3"/>
<line x1="1424.3" y1="151.2" x2="1442.6" y2="151.2" stroke="#9a9a9a" stroke-width="1.3"/>
<line x1="1424.3" y1="155.7" x2="1442.6" y2="155.7" stroke="#9a9a9a" stroke-width="1.3"/>
<line x1="1424.3" y1="160.2" x2="1442.6" y2="160.2" stroke="#9a9a9a" stroke-width="1.3"/>
<line x1="1462.2" y1="146.7" x2="1480.4" y2="146.7" stroke="#9a9a9a" stroke-width="1.3"/>
<line x1="1470" y1="151.2" x2="1480.4" y2="151.2" stroke="#9a9a9a" stroke-width="1.3"/>
<line x1="1462.2" y1="155.7" x2="1480.4" y2="155.7" stroke="#9a9a9a" stroke-width="1.3"/>
<line x1="1470" y1="160.2" x2="1480.4" y2="160.2" stroke="#9a9a9a" stroke-width="1.3"/>
<text x="1503.6" y="159.5" font-family="Liberation Sans" font-weight="bold" font-size="20.5" fill="#9a9a9a">A</text>
<rect x="1501" y="162" width="19" height="4" fill="#555"/>
<g transform="translate(1549.5,150.5) rotate(45)"><path d="M-2.6 -7.5 H2.6 V3.5 L0 6 L-2.6 3.5 Z" fill="none" stroke="#9a9a9a" stroke-width="1.5" stroke-linejoin="round"/></g>
<path d="M1538.9 159.6 L1545.2 157.6 L1540.8 153.2 Z" fill="#9a9a9a"/>
<circle cx="1578.4" cy="145" r="1.4" fill="#9a9a9a"/><line x1="1584" y1="145" x2="1595.5" y2="145" stroke="#9a9a9a" stroke-width="1.3"/>
<circle cx="1578.4" cy="152.6" r="1.4" fill="#9a9a9a"/><line x1="1584" y1="152.6" x2="1595.5" y2="152.6" stroke="#9a9a9a" stroke-width="1.3"/>
<circle cx="1578.4" cy="160" r="1.4" fill="#9a9a9a"/><line x1="1584" y1="160" x2="1595.5" y2="160" stroke="#9a9a9a" stroke-width="1.3"/>
<path d="M1608.5 150 H1618 L1613.2 156 Z" fill="#707070"/>
<polyline points="646,187.2 636.8,195.2 646,203.2" fill="none" stroke="#5a5a5a" stroke-width="1.4"/>
<polyline points="672.2,187.2 681,195.2 672.2,203.2" fill="none" stroke="#9a9a9a" stroke-width="1.4"/>
<rect x="702.8" y="185.3" width="16.6" height="19.4" fill="#fff" stroke="#a8a8a8" stroke-width="1.3"/>
<line x1="706.5" y1="189.70000000000002" x2="715.5" y2="189.70000000000002" stroke="#bcbcbc" stroke-width="1"/>
<line x1="706.5" y1="192.5" x2="715.5" y2="192.5" stroke="#bcbcbc" stroke-width="1"/>
<line x1="706.5" y1="195.3" x2="715.5" y2="195.3" stroke="#bcbcbc" stroke-width="1"/>
<line x1="706.5" y1="198.10000000000002" x2="715.5" y2="198.10000000000002" stroke="#bcbcbc" stroke-width="1"/>
<polyline points="1532.8,197.6 1540,190.4 1547.2,197.6" fill="none" stroke="#555" stroke-width="1.5"/>
<polyline points="1567.6,190.8 1575,198.2 1582.4,190.8" fill="none" stroke="#555" stroke-width="1.5"/>
<rect x="1600.6" y="188.3" width="17" height="13.6" rx="1" fill="none" stroke="#555" stroke-width="1.3"/>
<path d="M1600.6 188.9 H1618" stroke="#555" stroke-width="1.6"/><line x1="1608.6" y1="189" x2="1608.6" y2="202" stroke="#555" stroke-width="1.2"/>
<path d="M11.3 861.6 H28 M19.7 853.4 V869.8" stroke="#666" stroke-width="1.3"/>
<path d="M59 851.3 H46 Q45.5 851.3 45.5 851.8 V870 Q45.5 870.5 46 870.5 H60 Q60.7 870.5 60.7 870 V857" fill="none" stroke="#666" stroke-width="1.3"/>
<rect x="59.2" y="851" width="3.4" height="6.6" rx="1.5" fill="none" stroke="#666" stroke-width="1.2"/>
<path d="M53.2 857.8 V865.4 M49.4 861.6 H57" stroke="#666" stroke-width="1.3"/>
<circle cx="81" cy="861.7" r="1.9" fill="#666"/>
<circle cx="88.6" cy="861.7" r="1.9" fill="#666"/>
<circle cx="96.1" cy="861.7" r="1.9" fill="#666"/>
<path d="M692.7 857.9 H702.3 L697.5 863.2 Z" fill="#6a6a6a"/>
<circle cx="1573" cy="860.8" r="9.6" fill="none" stroke="#555" stroke-width="1.2"/>
<circle cx="1573" cy="860.8" r="5.4" fill="none" stroke="#555" stroke-width="1.2"/>
<circle cx="1573" cy="860.8" r="1.2" fill="#555"/>
<path d="M1606.5 870.8 H1599.6 V851.3 H1614.6 V861" fill="none" stroke="#555" stroke-width="1.2"/>
<polyline points="1606.4,866.1 1610.4,870.2 1618,862.6" fill="none" stroke="#555" stroke-width="1.3"/>
<path d="M810 384.5 L811.5 385.8 L813.0 384.5 L814.5 385.8 L816.0 384.5 L817.5 385.8 L819.0 384.5 L820.5 385.8 L822.0 384.5 L823.5 385.8 L825.0 384.5 L826.5 385.8 L828.0 384.5 L829.5 385.8 L831.0 384.5 L832.5 385.8 L834.0 384.5 L835.5 385.8 L837.0 384.5 L838.5 385.8" fill="none" stroke="#e53030" stroke-width="1.1"/>
<path d="M0 0 H8 A8 8 0 0 0 0 8 Z" fill="#d4d4d4"/><path d="M8 0.5 A7.5 7.5 0 0 0 0.5 8" fill="none" stroke="#9c9c9c" stroke-width="1"/>
<path d="M0 877 H8 A8 8 0 0 1 0 869 Z" fill="#c4c4c4"/><path d="M8 876.5 A7.5 7.5 0 0 1 0.5 869" fill="none" stroke="#9c9c9c" stroke-width="1"/></svg>
</body></html>
